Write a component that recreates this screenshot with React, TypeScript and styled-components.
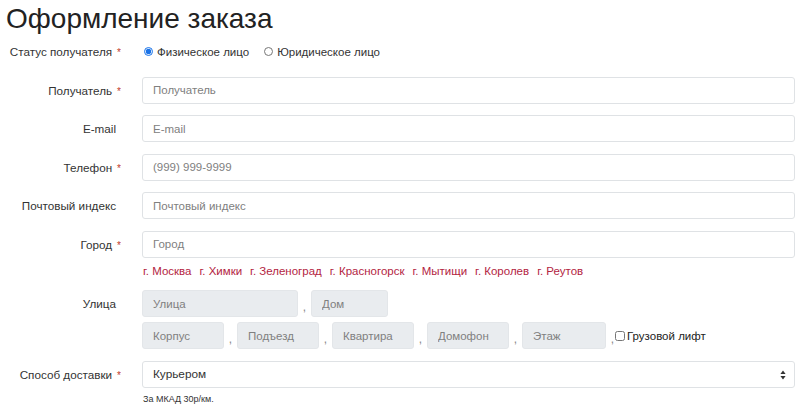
import React from "react";
import styled, { createGlobalStyle } from "styled-components";

const GlobalStyle = createGlobalStyle`
  body {
    margin: 0;
    background: #fff;
    font-family: "Liberation Sans", Arial, sans-serif;
    color: #333;
  }
`;

const cities = [
  "г. Москва",
  "г. Химки",
  "г. Зеленоград",
  "г. Красногорск",
  "г. Мытищи",
  "г. Королев",
  "г. Реутов",
];

const parts = [
  { name: "Корпус", width: 82 },
  { name: "Подъезд", width: 82 },
  { name: "Квартира", width: 82 },
  { name: "Домофон", width: 82 },
  { name: "Этаж", width: 84 },
];

const App: React.FC = () => {
  return (
    <Page>
      <GlobalStyle />
      <Title>Оформление заказа</Title>
      <Form>
        <Row>
          <Label required>Статус получателя</Label>
          <Field>
            <Radios>
              <RadioItem>
                <Radio type="radio" name="status" defaultChecked />
                Физическое лицо
              </RadioItem>
              <RadioItem>
                <Radio type="radio" name="status" />
                Юридическое лицо
              </RadioItem>
            </Radios>
          </Field>
        </Row>
        <Row>
          <Label required>Получатель</Label>
          <Field>
            <Input placeholder="Получатель" />
          </Field>
        </Row>
        <Row>
          <Label>E-mail</Label>
          <Field>
            <Input placeholder="E-mail" />
          </Field>
        </Row>
        <Row>
          <Label required>Телефон</Label>
          <Field>
            <Input placeholder="(999) 999-9999" />
          </Field>
        </Row>
        <Row>
          <Label>Почтовый индекс</Label>
          <Field>
            <Input placeholder="Почтовый индекс" />
          </Field>
        </Row>
        <Row>
          <Label required>Город</Label>
          <Field>
            <Input placeholder="Город" />
            <Cities>
              {cities.map((c) => (
                <CityLink key={c} href="#">
                  {c}
                </CityLink>
              ))}
            </Cities>
          </Field>
        </Row>
        <Row>
          <Label>Улица</Label>
          <Field>
            <Parts>
              <PartInput placeholder="Улица" w={156} disabled />
              <Comma>,</Comma>
              <PartInput placeholder="Дом" w={77} disabled />
            </Parts>
            <Parts>
              {parts.map((p) => (
                <React.Fragment key={p.name}>
                  <PartInput placeholder={p.name} w={p.width} disabled />
                  <Comma>,</Comma>
                </React.Fragment>
              ))}
              <Lift>
                <Check type="checkbox" />
                Грузовой лифт
              </Lift>
            </Parts>
          </Field>
        </Row>
        <Row>
          <Label required>Способ доставки</Label>
          <Field>
            <SelectWrap>
              <Select defaultValue="courier">
                <option value="courier">Курьером</option>
                <option value="pickup">Самовывоз</option>
              </Select>
              <Arrow width="6" height="10" viewBox="0 0 6 10">
                <path d="M3 0.5 L5.6 4 H0.4 Z M3 9.5 L5.6 6 H0.4 Z" fill="#333" />
              </Arrow>
            </SelectWrap>
            <Hint>За МКАД 30р/км.</Hint>
          </Field>
        </Row>
      </Form>
    </Page>
  );
};

const Page = styled.div`
  width: 800px;
  padding: 2px 5px 0 0;
  box-sizing: border-box;
`;

const Title = styled.h1`
  margin: 0 0 0 6px;
  font-weight: 400;
  font-size: 28px;
  line-height: 34px;
  color: #222;
`;

const Form = styled.form`
  display: flex;
  flex-direction: column;
  margin-top: 2px;
`;

const Row = styled.div`
  display: grid;
  grid-template-columns: 121px 1fr;
  column-gap: 21px;
  align-items: start;
  margin-bottom: 11.5px;
`;

const Label = styled.label<{ required?: boolean }>`
  display: block;
  height: 27px;
  overflow: hidden;
  text-align: right;
  font-size: 11.7px;
  line-height: 27px;
  color: #333;
  white-space: nowrap;

  &::after {
    content: ${({ required }) => (required ? '"*"' : '""')};
    color: #c0392b;
    margin-left: 5px;
    font-size: 10px;
    line-height: 0;
  }
`;

const Field = styled.div`
  display: flex;
  flex-direction: column;
  min-width: 0;
`;

const Radios = styled.div`
  display: flex;
  align-items: center;
  gap: 13px;
  height: 27px;
  font-size: 11.5px;
`;

const RadioItem = styled.label`
  display: flex;
  align-items: center;
  gap: 4px;
  color: #333;
`;

const Radio = styled.input`
  width: 9px;
  height: 9px;
  margin: 0 0 0 2px;
  accent-color: #1a73e8;
`;

const Input = styled.input`
  box-sizing: border-box;
  width: 100%;
  height: 27px;
  padding: 0 10px;
  border: 1px solid #dfe2e5;
  border-radius: 3px;
  font-family: "Liberation Sans", Arial, sans-serif;
  font-size: 11.5px;
  color: #333;
  background: #fff;

  &::placeholder {
    color: #808080;
  }
`;

const Cities = styled.div`
  display: flex;
  gap: 8px;
  margin-top: 6px;
  padding-left: 1px;
  line-height: 14px;
  height: 14px;
  margin-bottom: 1px;
`;

const CityLink = styled.a`
  color: #b3243f;
  font-size: 11.5px;
  text-decoration: none;
`;

const Parts = styled.div`
  display: flex;
  align-items: center;
  height: 27px;
  margin-bottom: 5px;

  &:last-child {
    margin-bottom: 0;
  }
`;

const PartInput = styled(Input)<{ w: number }>`
  width: ${({ w }) => w}px;
  background: #e9ecef;
  border-color: #e3e6e9;
  flex: none;
`;

const Comma = styled.span`
  width: 13px;
  text-align: center;
  font-size: 12px;
  color: #888;
  align-self: flex-end;
  line-height: 20px;
`;

const Lift = styled.label`
  display: flex;
  align-items: center;
  gap: 2px;
  font-size: 11.5px;
  color: #222;
  margin-left: -4px;
`;

const Check = styled.input`
  width: 10px;
  height: 10px;
  margin: 0;
`;

const SelectWrap = styled.div`
  position: relative;
`;

const Select = styled.select`
  appearance: none;
  box-sizing: border-box;
  width: 100%;
  height: 27px;
  padding: 0 10px;
  border: 1px solid #dfe2e5;
  border-radius: 3px;
  font-family: "Liberation Sans", Arial, sans-serif;
  font-size: 11.8px;
  color: #333;
  background: #fff;
`;

const Arrow = styled.svg`
  position: absolute;
  right: 9px;
  top: 9px;
  pointer-events: none;
`;

const Hint = styled.div`
  font-size: 9px;
  color: #333;
  margin-top: 6px;
  padding-left: 1px;
`;

export default App;
